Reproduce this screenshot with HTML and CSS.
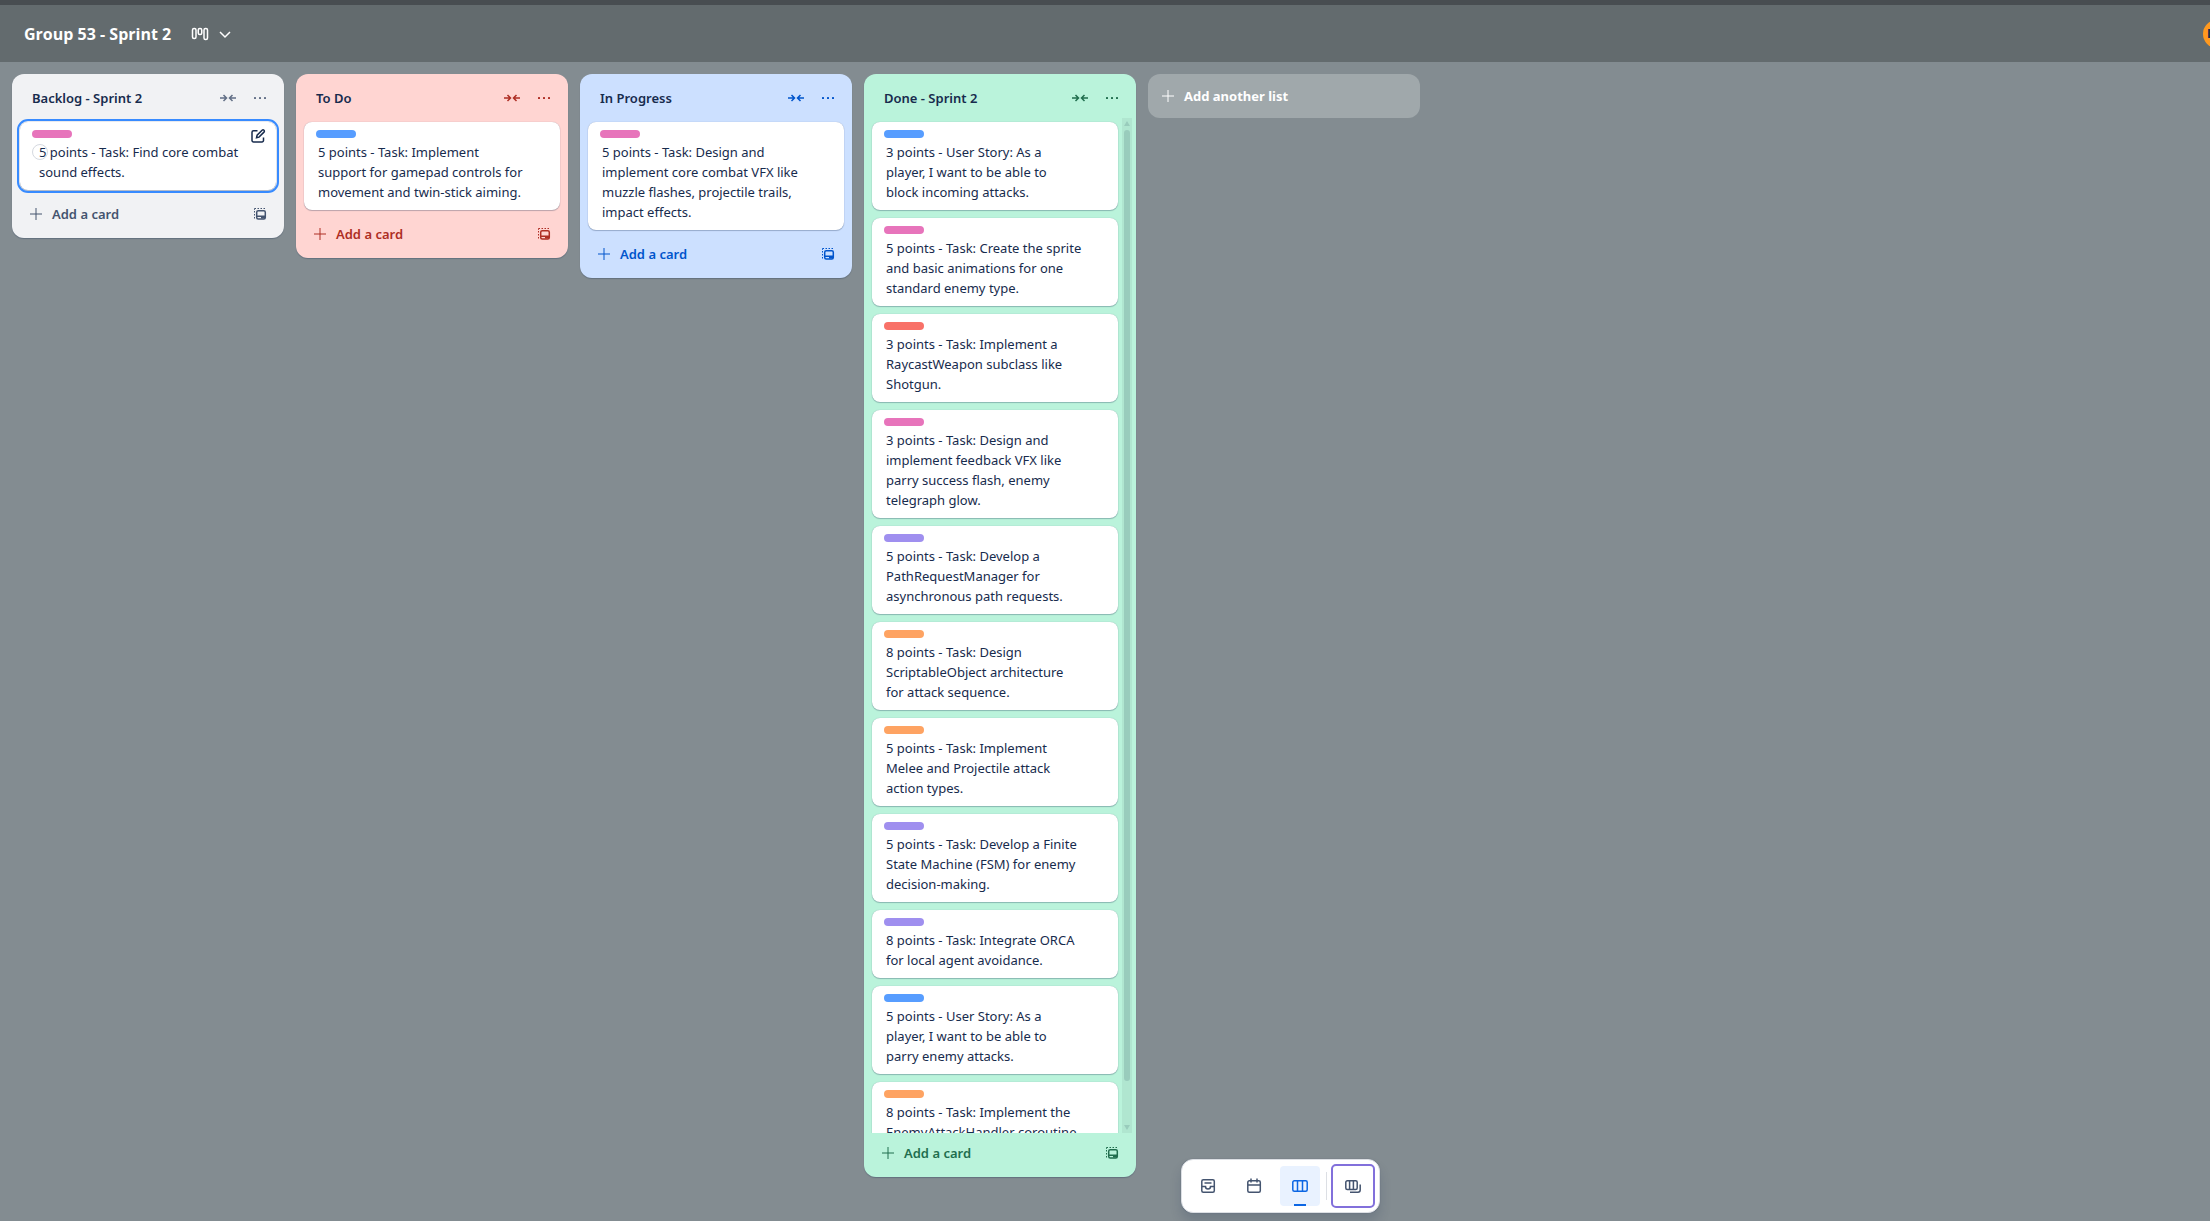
FILE: index.html
```html
<!DOCTYPE html>
<html lang="en">
<head>
<meta charset="utf-8">
<title>Group 53 - Sprint 2</title>
<link rel="stylesheet" href="styles.css">
</head>
<body>
<svg class="sprite" aria-hidden="true">
  <symbol id="i-collapse" viewBox="0 0 16 16"><path d="M0 8h6M3.500 5l3 3-3 3M16 8h-6M12.500 5l-3 3 3 3"/></symbol>
  <symbol id="i-more" viewBox="0 0 16 16"><g class="solid"><rect x="2" y="7" width="2" height="2" rx=".5"/><rect x="7" y="7" width="2" height="2" rx=".5"/><rect x="12" y="7" width="2" height="2" rx=".5"/></g></symbol>
  <symbol id="i-plus" viewBox="0 0 16 16"><path d="M8 2v12M2 8h12"/></symbol>
  <symbol id="i-template" viewBox="0 0 16 16"><rect x="4.700" y="4.700" width="8.600" height="8.300" rx="1.500"/><path class="solid" d="M5 9.500h8v1.500H5zM9 10.500h4v2H9z"/><path class="thin" d="M2.500 12.500v-1.500M2.500 9.500V8M2.500 6.500V5M2.500 3.800V2.500H4M5.500 2.500H7M8.500 2.500H10M11.500 2.500H13"/></symbol>
  <symbol id="i-edit" viewBox="0 0 16 16"><path d="M7.500 2.800H3.500A1.500 1.500 0 0 0 2 4.300V12.500A1.500 1.500 0 0 0 3.500 14h8.500a1.500 1.500 0 0 0 1.500-1.500V9.500M6.500 9.800l.6-2.600 5-5a1.200 1.200 0 0 1 1.900 1.900l-5 5z"/></symbol>
  <symbol id="i-board" viewBox="0 0 18 16"><rect x="1.500" y="2.500" width="3.500" height="10" rx="1.500"/><rect x="7.250" y="2.500" width="3.500" height="6" rx="1.500"/><rect x="13" y="2.500" width="3.500" height="11" rx="1.500"/></symbol>
  <symbol id="i-chevron" viewBox="0 0 16 16"><path d="M3 6l5 5 5-5"/></symbol>
  <symbol id="i-inbox" viewBox="0 0 16 16"><rect x="1.800" y="1.800" width="12.500" height="12.500" rx="1.500"/><path d="M4.500 5h7M2 8.500h3.500q0 2.500 2.500 2.500t2.500-2.500H14"/></symbol>
  <symbol id="i-calendar" viewBox="0 0 16 16"><rect x="1.800" y="2.800" width="12.500" height="11.500" rx="1.500"/><path d="M2 7h12M5 .5v4M11 .5v4"/></symbol>
  <symbol id="i-columns" viewBox="0 0 16 16"><rect x=".8" y="2.800" width="14.400" height="10.400" rx="1.500"/><path d="M5.500 3v10M10.500 3v10"/></symbol>
  <symbol id="i-switch" viewBox="0 0 16 16"><rect x=".8" y="2.800" width="11.400" height="8.700" rx="1.500"/><path d="M4.600 3v8.500M8.400 3v8.500M15.200 6.500V12a2.200 2.200 0 0 1-2.200 2.200H5"/></symbol>
</svg>

<div class="strip"></div>
<header class="board-header">
  <h1 class="board-title">Group 53 - Sprint 2</h1>
  <button class="view-switch" aria-label="Board view"><svg class="icon board-icon"><use href="#i-board"/></svg><svg class="icon"><use href="#i-chevron"/></svg></button>
  <button class="avatar" aria-label="Member">DM</button>
</header>

<main class="board">
  <section class="list gray">
    <div class="list-head"><h2>Backlog - Sprint 2</h2><button aria-label="Collapse list"><svg class="icon"><use href="#i-collapse"/></svg></button><button aria-label="List actions"><svg class="icon"><use href="#i-more"/></svg></button></div>
    <div class="list-body"><ol class="cards">
      <li class="card focused"><span class="label pink"></span><p>5 points - Task: Find core combat sound effects.</p><span class="check"></span><button class="edit" aria-label="Edit card"><svg class="icon"><use href="#i-edit"/></svg></button></li>
    </ol></div>
    <div class="list-foot"><button class="add"><svg class="icon"><use href="#i-plus"/></svg>Add a card</button><button aria-label="Create from template"><svg class="icon"><use href="#i-template"/></svg></button></div>
  </section>

  <section class="list red">
    <div class="list-head"><h2>To Do</h2><button aria-label="Collapse list"><svg class="icon"><use href="#i-collapse"/></svg></button><button aria-label="List actions"><svg class="icon"><use href="#i-more"/></svg></button></div>
    <div class="list-body"><ol class="cards">
      <li class="card"><span class="label blue"></span><p>5 points - Task: Implement support for gamepad controls for movement and twin-stick aiming.</p></li>
    </ol></div>
    <div class="list-foot"><button class="add"><svg class="icon"><use href="#i-plus"/></svg>Add a card</button><button aria-label="Create from template"><svg class="icon"><use href="#i-template"/></svg></button></div>
  </section>

  <section class="list azure">
    <div class="list-head"><h2>In Progress</h2><button aria-label="Collapse list"><svg class="icon"><use href="#i-collapse"/></svg></button><button aria-label="List actions"><svg class="icon"><use href="#i-more"/></svg></button></div>
    <div class="list-body"><ol class="cards">
      <li class="card"><span class="label pink"></span><p>5 points - Task: Design and implement core combat VFX like muzzle flashes, projectile trails, impact effects.</p></li>
    </ol></div>
    <div class="list-foot"><button class="add"><svg class="icon"><use href="#i-plus"/></svg>Add a card</button><button aria-label="Create from template"><svg class="icon"><use href="#i-template"/></svg></button></div>
  </section>

  <section class="list green">
    <div class="list-head"><h2>Done - Sprint 2</h2><button aria-label="Collapse list"><svg class="icon"><use href="#i-collapse"/></svg></button><button aria-label="List actions"><svg class="icon"><use href="#i-more"/></svg></button></div>
    <div class="list-body"><ol class="cards">
      <li class="card"><span class="label blue"></span><p>3 points - User Story: As a player, I want to be able to block incoming attacks.</p></li>
      <li class="card"><span class="label pink"></span><p>5 points - Task: Create the sprite and basic animations for one standard enemy type.</p></li>
      <li class="card"><span class="label coral"></span><p>3 points - Task: Implement a RaycastWeapon subclass like Shotgun.</p></li>
      <li class="card"><span class="label pink"></span><p>3 points - Task: Design and implement feedback VFX like parry success flash, enemy telegraph glow.</p></li>
      <li class="card"><span class="label purple"></span><p>5 points - Task: Develop a PathRequestManager for asynchronous path requests.</p></li>
      <li class="card"><span class="label orange"></span><p>8 points - Task: Design ScriptableObject architecture for attack sequence.</p></li>
      <li class="card"><span class="label orange"></span><p>5 points - Task: Implement Melee and Projectile attack action types.</p></li>
      <li class="card"><span class="label purple"></span><p>5 points - Task: Develop a Finite State Machine (FSM) for enemy decision-making.</p></li>
      <li class="card"><span class="label purple"></span><p>8 points - Task: Integrate ORCA for local agent avoidance.</p></li>
      <li class="card"><span class="label blue"></span><p>5 points - User Story: As a player, I want to be able to parry enemy attacks.</p></li>
      <li class="card"><span class="label orange"></span><p>8 points - Task: Implement the EnemyAttackHandler coroutine</p></li>
    </ol>
    <div class="track"><span class="arrow up"></span><span class="rail"><span class="thumb"></span></span><span class="arrow down"></span></div></div>
    <div class="list-foot"><button class="add"><svg class="icon"><use href="#i-plus"/></svg>Add a card</button><button aria-label="Create from template"><svg class="icon"><use href="#i-template"/></svg></button></div>
  </section>

  <button class="add-list"><svg class="icon"><use href="#i-plus"/></svg>Add another list</button>
</main>

<nav class="dock" aria-label="Views">
  <button aria-label="Inbox"><svg class="icon"><use href="#i-inbox"/></svg></button>
  <button aria-label="Planner"><svg class="icon"><use href="#i-calendar"/></svg></button>
  <button class="active" aria-label="Board"><svg class="icon"><use href="#i-columns"/></svg></button>
  <span class="divider"></span>
  <button class="ringed" aria-label="Switch boards"><svg class="icon"><use href="#i-switch"/></svg></button>
</nav>
</body>
</html>
```
FILE: styles.css
```css
* { box-sizing: border-box; }
body {
  margin: 0;
  height: 100vh;
  display: flex;
  flex-direction: column;
  overflow: hidden;
  background: #838c91;
  color: #172b4d;
  font: 13px/20px "Segoe UI", "Noto Sans", "Open Sans", sans-serif;
}
h1, h2, p, ol { margin: 0; padding: 0; list-style: none; }
button {
  display: flex;
  align-items: center;
  justify-content: center;
  padding: 0;
  border: 0;
  background: none;
  color: inherit;
  font: inherit;
  cursor: pointer;
}
.sprite { display: none; }
.icon { width: 16px; height: 16px; flex: none; fill: none; stroke: currentColor; stroke-width: 1.5; }
.solid { fill: currentColor; stroke: none; }
.thin { stroke-width: 1; }

.strip { flex: none; height: 5px; background: #484d51; }
.board-header {
  flex: none;
  display: flex;
  align-items: center;
  height: 57px;
  padding-left: 24px;
  background: #636b6e;
  color: #fff;
}
.board-title { font-family: "Segoe UI", "Open Sans", sans-serif; font-size: 16px; line-height: 20px; font-weight: 700; }
.view-switch { gap: 8px; margin-left: 20px; }
.board-icon { width: 18px; }
.avatar {
  flex: none;
  width: 28px;
  height: 28px;
  margin-left: auto;
  margin-right: -21px;
  border-radius: 50%;
  background: #ff991f;
  color: #172b4d;
  font-size: 12px;
  font-weight: 700;
}

.board {
  flex: 1;
  min-height: 0;
  display: flex;
  align-items: flex-start;
  gap: 12px;
  padding: 12px 12px 44px;
}
.list {
  --surface: #f1f2f4;
  --accent: #626f86;
  flex: none;
  width: 272px;
  max-height: 100%;
  display: flex;
  flex-direction: column;
  border-radius: 12px;
  background: var(--surface);
  box-shadow: 0 1px 1px #091e4240;
}
.red { --surface: #ffd5d2; --accent: #ae2e24; }
.azure { --surface: #cce0ff; --accent: #0055cc; }
.green { --surface: #baf3db; --accent: #216e4e; }
.list-head {
  flex: none;
  display: flex;
  align-items: center;
  height: 44px;
  padding: 4px 8px 0 20px;
  color: var(--accent);
}
.list-head h2 { flex: 1; color: #172b4d; font-size: 13px; line-height: 20px; font-weight: 600; }
.list-head button, .list-foot > button:last-child { width: 32px; height: 32px; }
.list-body { display: flex; flex: 0 1 auto; min-height: 0; margin: 0 4px; }
.cards {
  flex: 1;
  display: flex;
  flex-direction: column;
  gap: 8px;
  padding: 4px;
  overflow: hidden;
}
.card {
  position: relative;
  flex: none;
  padding: 8px 12px;
  border-radius: 8px;
  background: #fff;
  box-shadow: 0 1px 1px #091e4240, 0 0 1px #091e424f;
}
.card p { margin-top: 4px; padding: 0 24px 0 2px; }
.label { display: block; width: 40px; height: 8px; border-radius: 4px; }
.pink { background: #e774bb; }
.blue { background: #579dff; }
.coral { background: #f87168; }
.purple { background: #9f8fef; }
.orange { background: #fea362; }
.focused { outline: 2px solid #388bff; outline-offset: 1px; }
.card.focused p { padding: 0 16px 0 7px; }
.check {
  position: absolute;
  left: 12px;
  top: 22px;
  width: 16px;
  height: 16px;
  border: 1px solid #d5d9e0;
  border-radius: 50%;
}
.edit { position: absolute; right: 4px; top: 0; width: 28px; height: 28px; }

.track {
  flex: none;
  width: 10px;
  display: flex;
  flex-direction: column;
  align-items: center;
  gap: 4px;
  padding: 3px 0;
  background: #b0e6d0;
}
.arrow { border: 3px solid transparent; }
.up { border-top: 0; border-bottom: 5px solid #99ccbc; }
.down { border-bottom: 0; border-top: 5px solid #99ccbc; }
.rail { flex: 1; width: 6px; }
.thumb { display: block; height: 96%; border-radius: 3px; background: #99ccbc; }

.list-foot {
  flex: none;
  display: flex;
  align-items: center;
  justify-content: space-between;
  padding: 4px 8px 8px;
  color: var(--accent);
}
.gray .list-foot { color: #44546f; }
.list-foot .add { gap: 8px; height: 32px; padding: 0 8px; font-weight: 600; }
.add .icon, .add-list .icon { stroke-width: 1; }

.add-list {
  flex: none;
  justify-content: flex-start;
  gap: 8px;
  width: 272px;
  height: 44px;
  padding: 0 12px;
  border-radius: 12px;
  background: #a0a8ab;
  color: #fff;
  font-weight: 700;
}

.dock {
  position: absolute;
  right: 830px;
  bottom: 8px;
  display: flex;
  align-items: center;
  gap: 6px;
  padding: 6px;
  border: 1px solid #dcdfe4;
  border-radius: 12px;
  background: #fff;
  color: #44546f;
  box-shadow: 0 8px 12px #091e4226, 0 0 1px #091e424f;
}
.dock button { position: relative; width: 40px; height: 40px; border-radius: 4px; }
.dock .active { background: #e9f2ff; color: #0c66e4; }
.active::after {
  content: "";
  position: absolute;
  left: 14px;
  right: 14px;
  bottom: 0;
  height: 2px;
  background: currentColor;
}
.divider { width: 1px; height: 28px; background: #dcdfe4; }
.dock .ringed { border-radius: 3px; outline: 2px solid #8270db; }
```
